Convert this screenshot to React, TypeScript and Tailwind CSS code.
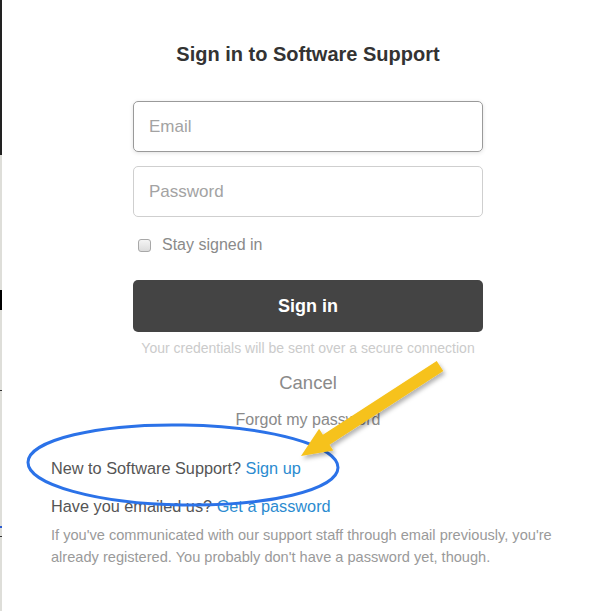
export default function App() {
    return (
        <div className="relative flex w-[608px] h-[611px] overflow-hidden bg-white" style={{ fontFamily: '"Liberation Sans", Arial, sans-serif' }}>
            {/* Left edge of the window behind */}
            <div className="flex flex-col w-[2px] shrink-0 bg-[#deded9]">
                <div className="h-[155px] bg-[#222]" />
                <div className="h-[135px]" />
                <div className="h-[20px] bg-black" />
                <div className="h-[80px]" />
                <div className="h-[1px] bg-[#333]" />
                <div className="h-[135px]" />
                <div className="h-[2px] bg-[#2b5bd0]" />
                <div className="h-[8px]" />
                <div className="h-[1px] bg-[#333]" />
            </div>

            {/* Sign in panel */}
            <div className="ml-[49px] w-[514px] pt-[42px] flex flex-col">
                <h1 className="text-center text-[20px] leading-[24px] font-bold text-[#333]">Sign in to Software Support</h1>

                <div className="mx-auto w-[350px] flex flex-col">
                    <input
                        placeholder="Email"
                        className="mt-[35px] h-[51px] w-full rounded-[5px] border border-[#9a9a9a] px-[15px] text-[17px] text-[#333] placeholder:text-[#a3a3a3] shadow-[0_1px_4px_rgba(0,0,0,0.12)] outline-none"
                    />
                    <input
                        placeholder="Password"
                        type="password"
                        className="mt-[14px] h-[51px] w-full rounded-[5px] border border-[#cfcfcf] px-[15px] text-[17px] text-[#333] placeholder:text-[#a3a3a3] outline-none"
                    />

                    <label className="mt-[18px] h-[20px] flex items-center gap-[11px] pl-[5px]">
                        <span className="w-[13px] h-[13px] rounded-[3px] border border-[#a8a8a8] bg-gradient-to-b from-[#f4f4f4] to-[#dcdcdc]" />
                        <span className="text-[16px] text-[#8a8a8a]">Stay signed in</span>
                    </label>

                    <button className="mt-[25px] h-[52px] w-full rounded-[5px] bg-[#444] text-white text-[18px] font-bold">
                        Sign in
                    </button>

                    <p className="mt-[7px] text-center text-[14px] leading-[18px] text-[#cbcbcb] whitespace-nowrap">
                        Your credentials will be sent over a secure connection
                    </p>
                    <p className="mt-[14px] text-center text-[18.5px] leading-[24px] text-[#8a8a8a]">Cancel</p>
                    <p className="mt-[15px] text-center text-[16px] leading-[20px] text-[#8a8a8a]">Forgot my password</p>
                </div>

                <p className="mt-[28px] text-[16.3px] leading-[20px] text-[#555]">
                    New to Software Support? <span className="text-[#2b8bd0]">Sign up</span>
                </p>
                <p className="mt-[18px] text-[16.3px] leading-[20px] text-[#555]">
                    Have you emailed us? <span className="text-[#2b8bd0]">Get a password</span>
                </p>
                <p className="mt-[8px] text-[14.6px] leading-[22px] text-[#9a9a9a]">
                    If you've communicated with our support staff through email previously, you're already registered. You probably don't have a password yet, though.
                </p>
            </div>

            {/* Annotations */}
            <svg className="absolute left-0 top-0 pointer-events-none" width="608" height="611">
                <defs>
                    <filter id="sh" x="-20%" y="-20%" width="140%" height="140%">
                        <feDropShadow dx="2" dy="3" stdDeviation="2" floodColor="#000" floodOpacity="0.3" />
                    </filter>
                </defs>
                <ellipse cx="183" cy="465" rx="155" ry="40" fill="none" stroke="#2b72e8" strokeWidth="3" transform="rotate(1 183 465)" />
                <polygon
                    points="443.3,371 436.7,361 322.9,434.7 319.1,428.8 301,456 333.3,450.6 329.5,444.7"
                    fill="#f6c21c"
                    filter="url(#sh)"
                />
            </svg>
        </div>
    );
}
